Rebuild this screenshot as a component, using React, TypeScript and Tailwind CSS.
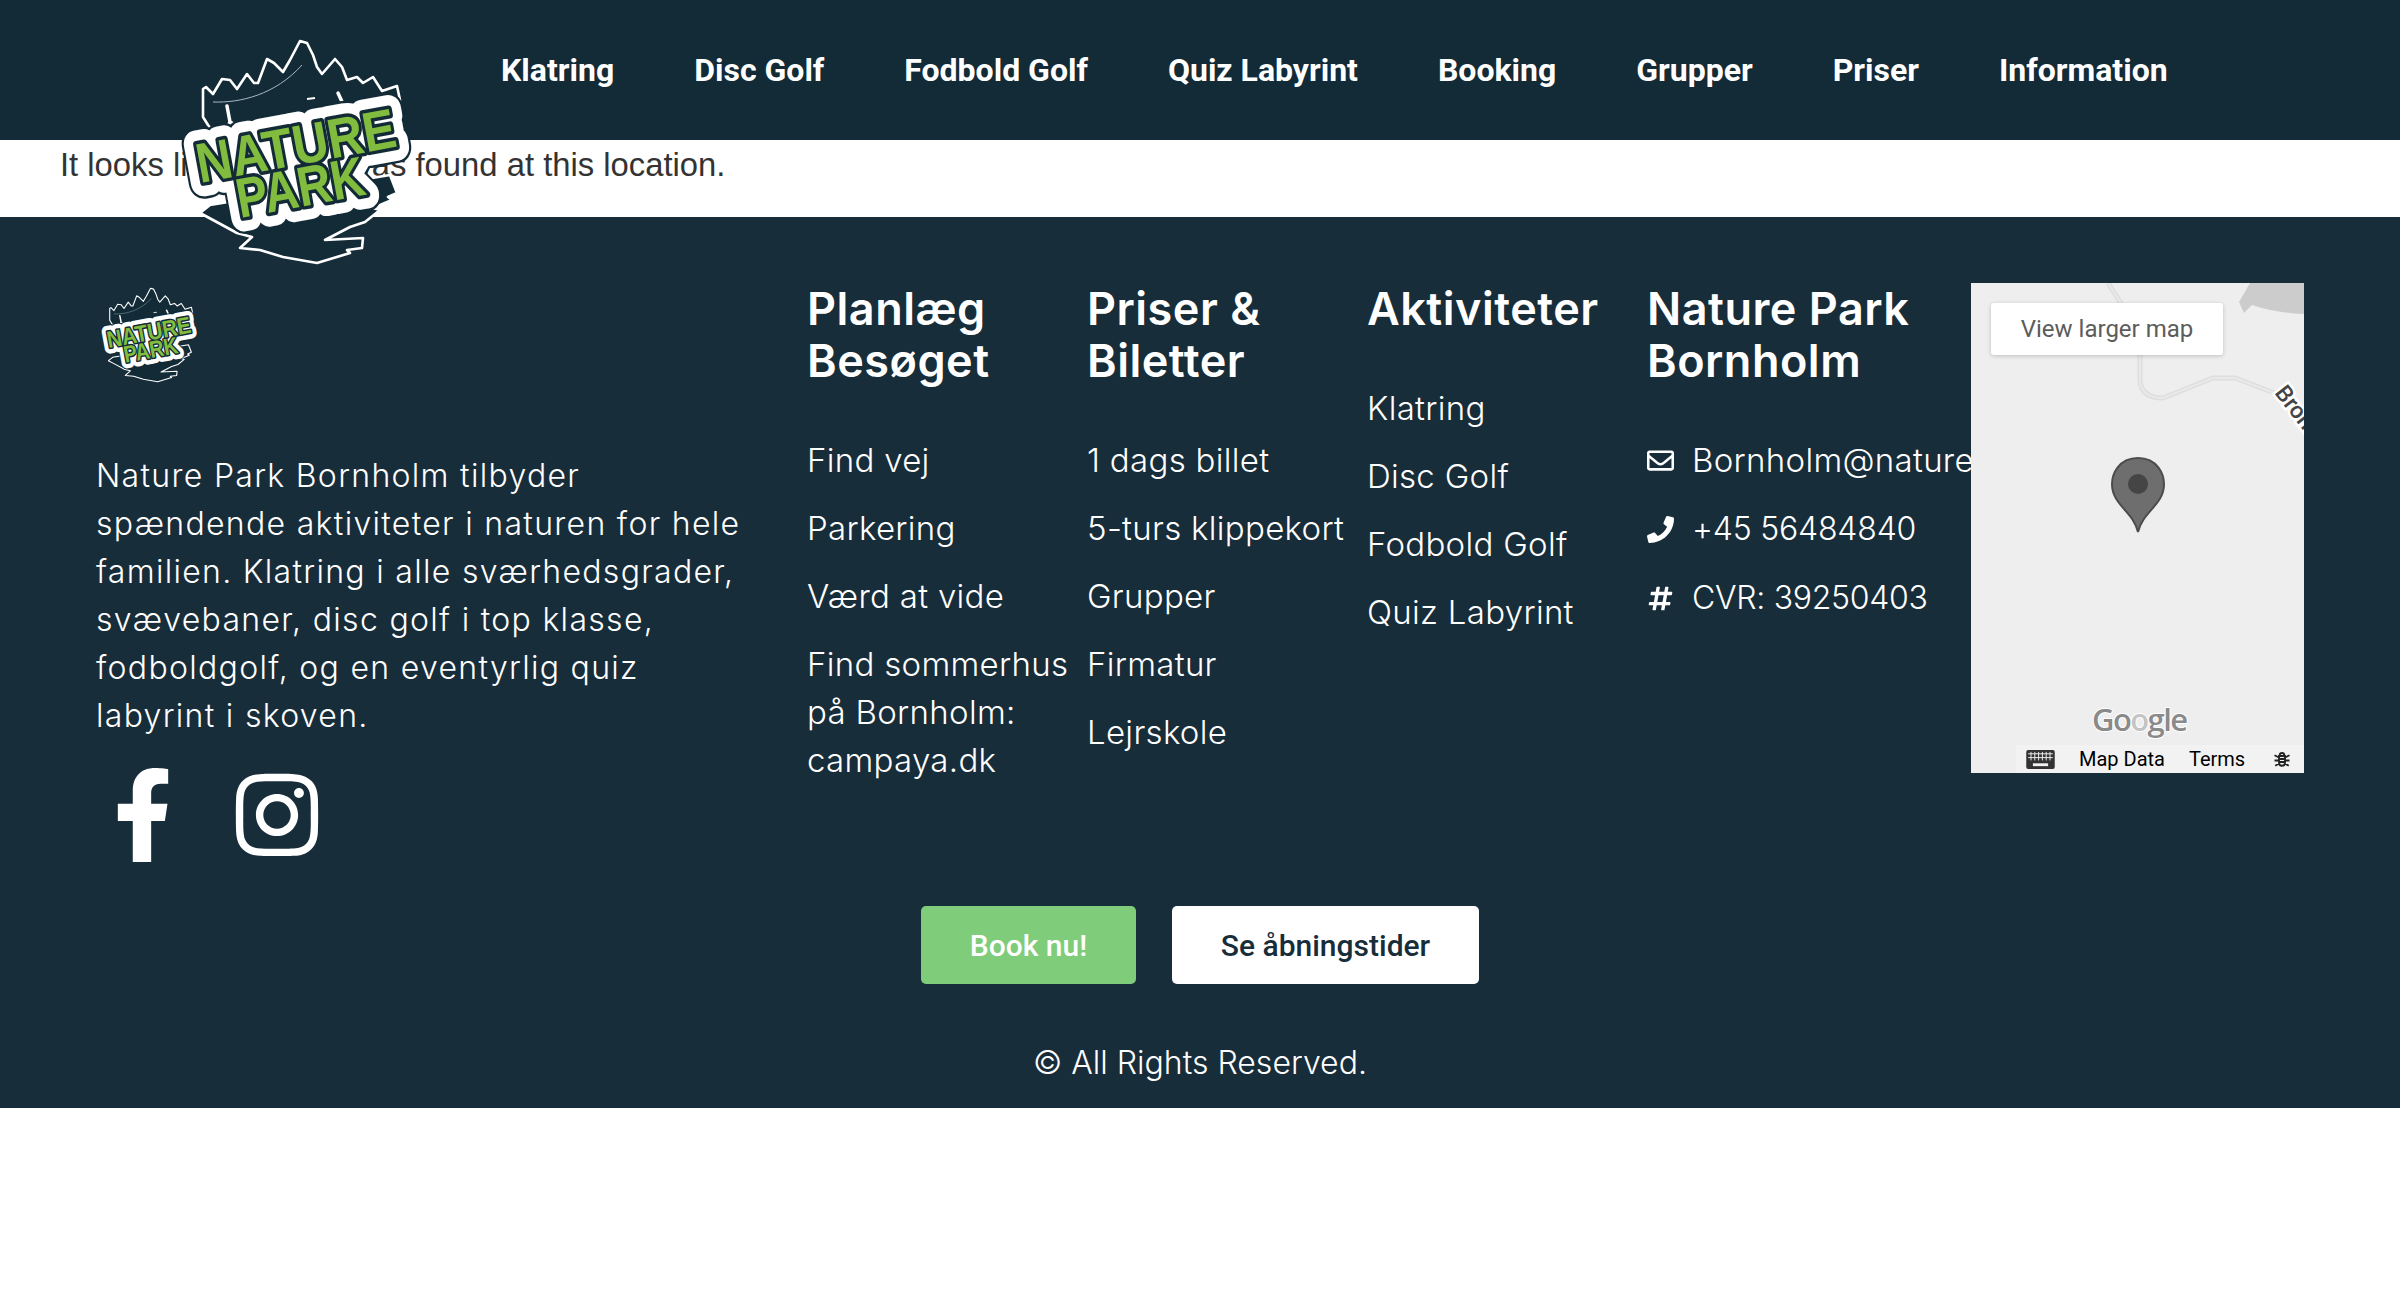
import { FaFacebookF, FaInstagram, FaRegEnvelope, FaPhone, FaHashtag } from 'react-icons/fa';

const navItems = ['Klatring', 'Disc Golf', 'Fodbold Golf', 'Quiz Labyrint', 'Booking', 'Grupper', 'Priser', 'Information'];

const columns = [
  { title: ['Planlæg', 'Besøget'], items: ['Find vej', 'Parkering', 'Værd at vide', 'Find sommerhus på Bornholm: campaya.dk'] },
  { title: ['Priser &', 'Biletter'], items: ['1 dags billet', '5-turs klippekort', 'Grupper', 'Firmatur', 'Lejrskole'] },
  { title: ['Aktiviteter'], items: ['Klatring', 'Disc Golf', 'Fodbold Golf', 'Quiz Labyrint'] },
];

const contacts = [
  { icon: <FaRegEnvelope />, text: 'Bornholm@naturepark.dk', size: 'text-[33px] tracking-[0.3px]' },
  { icon: <FaPhone />, text: '+45 56484840', size: 'text-[32px] tracking-[-0.2px] pt-[1px]' },
  { icon: <FaHashtag />, text: 'CVR: 39250403', size: 'text-[32px] tracking-[-0.3px] pt-[1px]' },
];

const letterLayers = [
  { stroke: '#122b37', w: 33 },
  { stroke: 'white', w: 28 },
  { stroke: '#122b37', w: 7 },
  { stroke: '#82bc3f', w: 0 },
];

const Logo = ({ className }: { className: string }) => (
  <svg viewBox="30 38 235 228" className={className}>
    {/* tree line */}
    <path
      d="M53 89 L56 87 L63 94 L72 79 L80 80 L87 89 L97 74 L104 83 L108 83 L117 59 L124 63 L133 72 L140 60 L150 41 L157 43 L163 55 L167 67 L172 74 L185 59 L192 67 L197 80 L207 77 L213 83 L223 77 L232 91 L247 86 L250 100 L65 133 L58 125 L53 117 Z"
      fill="#122b37"
      stroke="white"
      strokeWidth="2.6"
      strokeLinejoin="round"
    />
    {/* eagle wing */}
    <path
      d="M247 193 L238 197 L242 200 L223 208 L230 210 L215 222 L200 227 L175 240 L213 238 L212 248 L197 250 L200 253 L167 263 L133 257 L110 250 L90 248 L102 237 L87 233 L63 220 L50 213 L60 205 L240 175 Z"
      fill="#122b37"
      stroke="white"
      strokeWidth="2.6"
      strokeLinejoin="round"
    />
    <path d="M63 102 C90 103 125 95 152 65" fill="none" stroke="#a9b8bd" strokeWidth="1" />
    <path d="M157 99 L165 98" stroke="white" strokeWidth="2" />
    {/* climbers */}
    <path d="M77 106 L80 122 L74 133 M80 122 L95 130 L107 137" fill="none" stroke="white" strokeWidth="3.5" strokeLinecap="round" />
    <path d="M188 93 L194 106 L183 118 M194 106 L205 118 M194 106 L218 115" fill="none" stroke="white" strokeWidth="3.5" strokeLinecap="round" />
    <g fontFamily="'Liberation Sans', sans-serif" fontWeight="700" strokeLinejoin="round" style={{ paintOrder: 'stroke' }}>
      {letterLayers.map((l) => (
        <g key={l.stroke + l.w} fill={l.w === 0 ? l.stroke : 'none'} stroke={l.w === 0 ? 'none' : l.stroke} strokeWidth={l.w}>
          <text transform="translate(50 183) rotate(-10.5)" fontSize="56" textLength="202" lengthAdjust="spacingAndGlyphs">NATURE</text>
          <text transform="translate(90 218) rotate(-10.5)" fontSize="56" textLength="130" lengthAdjust="spacingAndGlyphs">PARK</text>
        </g>
      ))}
    </g>
  </svg>
);

const MapEmbed = () => (
  <div className="relative z-10 h-[490px] w-[333px] shrink-0 overflow-hidden bg-[#eeeeee] font-['Roboto',sans-serif]">
    <svg viewBox="0 0 333 490" className="absolute inset-0 h-full w-full">
      <path d="M279 0 L268 19 L273 30 L281 22 Q305 30 333 31 L333 0 Z" fill="#cccccc" />
      <path d="M137 0 L169 50 L169 97 Q170 115 192 115 L242 95 L264 95 L306 111" fill="none" stroke="#dedede" strokeWidth="5" />
      <path d="M137 0 L169 50 L169 97 Q170 115 192 115 L242 95 L264 95 L306 111" fill="none" stroke="#e9e9e9" strokeWidth="2" />
      <text x="303" y="110" fontSize="23" fontWeight="500" fill="#444" stroke="white" strokeWidth="5" transform="rotate(52 303 110)" style={{ paintOrder: 'stroke' }} fontFamily="Roboto, sans-serif">Brom</text>
      <path d="M167 175 C147 175 141 192 141 201 C141 222 162 228 167 249 C172 228 193 222 193 201 C193 192 187 175 167 175 Z" fill="#6e6e6e" stroke="#4c4c4c" strokeWidth="2" />
      <circle cx="167" cy="201" r="10" fill="#454545" />
      <text x="121" y="448" fontSize="31" fontWeight="600" fill="#8a8a8a" stroke="white" strokeWidth="2" style={{ paintOrder: 'stroke' }} fontFamily="'Open Sans', sans-serif" letterSpacing="-1.6">Go<tspan fill="#c4c4c4">o</tspan>gle</text>
    </svg>
    <a className="absolute left-5 top-5 flex h-[52px] w-[232px] items-center justify-center rounded-[3px] bg-white text-2xl text-[#5c5c5c] shadow-[0_1px_4px_rgba(0,0,0,0.2)]">View larger map</a>
    <div className="absolute bottom-0 right-0 flex h-7 w-[288px] items-center bg-[#f2f2f2] pl-[10px] text-[20px] leading-none text-black">
      <svg viewBox="0 0 30 20" className="h-[19px] w-[29px]">
        <rect width="30" height="20" rx="2" fill="#333" />
        <path d="M2 4h26M2 8h26M5 2v9M9 2v9M13 2v9M17 2v9M21 2v9M25 2v9" stroke="#f2f2f2" strokeWidth="1" />
        <rect x="7" y="14" width="16" height="3" fill="#f2f2f2" />
      </svg>
      <span className="ml-6">Map Data</span>
      <span className="ml-6">Terms</span>
      <svg viewBox="0 0 24 24" className="ml-7 h-[18px] w-[18px]" fill="none" stroke="#222" strokeWidth="2.5">
        <path d="M8 8h8v9a4 4 0 0 1-8 0zM9 7a3 3 0 0 1 6 0M2 7l6 3M22 7l-6 3M2 14h6M22 14h-6M3 21l5-3M21 21l-5-3M8 12h8M8 16h8" />
      </svg>
    </div>
  </div>
);

export default function App() {
  return (
    <div className="relative bg-white font-['Inter',sans-serif]">
      <header className="flex h-[140px] items-center bg-[#122b37] pl-[501px]">
        <nav className="flex gap-[80px]">
          {navItems.map((item) => (
            <a key={item} className="font-['Roboto',sans-serif] text-[32px] font-bold text-white">{item}</a>
          ))}
        </nav>
      </header>
      <Logo className="absolute left-[180px] top-[38px] z-20 h-[228px] w-[235px]" />

      <main className="h-[77px] pl-[60px] pt-[4px] font-['Liberation_Sans',sans-serif] text-[32.8px] leading-[42px] text-[#333333]">
        It looks like nothing was found at this location.
      </main>

      <footer className="h-[891px] bg-[#182d3a] pt-[66px] text-white">
        <div className="flex">
          <div className="w-[807px] shrink-0 pl-24">
            <Logo className="ml-[4px] mt-[4px] h-[96px] w-[99px]" />
            <p className="mt-[69px] w-[650px] text-[32px] font-light leading-[48px] tracking-[1.3px]">
              Nature Park Bornholm tilbyder spændende aktiviteter i naturen for hele familien. Klatring i alle sværhedsgrader, svævebaner, disc golf i top klasse, fodboldgolf, og en eventyrlig quiz labyrint i skoven.
            </p>
            <div className="mt-[28px] flex items-start text-[94px] leading-none">
              <FaFacebookF />
              <FaInstagram className="ml-[40px]" />
            </div>
          </div>

          {columns.map((col) => (
            <div key={col.title[0]} className="w-[280px] shrink-0 pr-4">
              <h2 className="text-[45px] font-semibold leading-[52px] tracking-[0.5px]">
                {col.title.map((line) => (
                  <div key={line}>{line}</div>
                ))}
              </h2>
              <ul className="mt-[49px] flex flex-col gap-5 text-[33px] font-light leading-[48px] tracking-[0.3px]">
                {col.items.map((item) => (
                  <li key={item}>{item}</li>
                ))}
              </ul>
            </div>
          ))}

          <div className="w-[324px] shrink-0">
            <h2 className="whitespace-nowrap text-[45px] font-semibold leading-[52px] tracking-[0.5px]">
              <div>Nature Park</div>
              <div>Bornholm</div>
            </h2>
            <ul className="mt-[49px] flex flex-col gap-5 font-light leading-[48px]">
              {contacts.map((c) => (
                <li key={c.text} className={`flex items-center whitespace-nowrap ${c.size}`}>
                  <span className="flex w-[45px] shrink-0 text-[27px]">{c.icon}</span>
                  {c.text}
                </li>
              ))}
            </ul>
          </div>

          <MapEmbed />
        </div>

        <div className="mt-[44px] text-center">
          <div className="flex justify-center gap-[36px] font-['Roboto',sans-serif] text-[30px] font-medium">
            <a className="flex h-[78px] w-[215px] items-center justify-center rounded-[5px] bg-[#7fcc7b] text-white">Book nu!</a>
            <a className="flex h-[78px] w-[307px] items-center justify-center rounded-[5px] bg-white text-[#182d3a]">Se åbningstider</a>
          </div>
          <p className="mt-[55px] text-[32px] font-light leading-[48px]">© All Rights Reserved.</p>
        </div>
      </footer>
      <div className="h-[190px]" />
    </div>
  );
}
